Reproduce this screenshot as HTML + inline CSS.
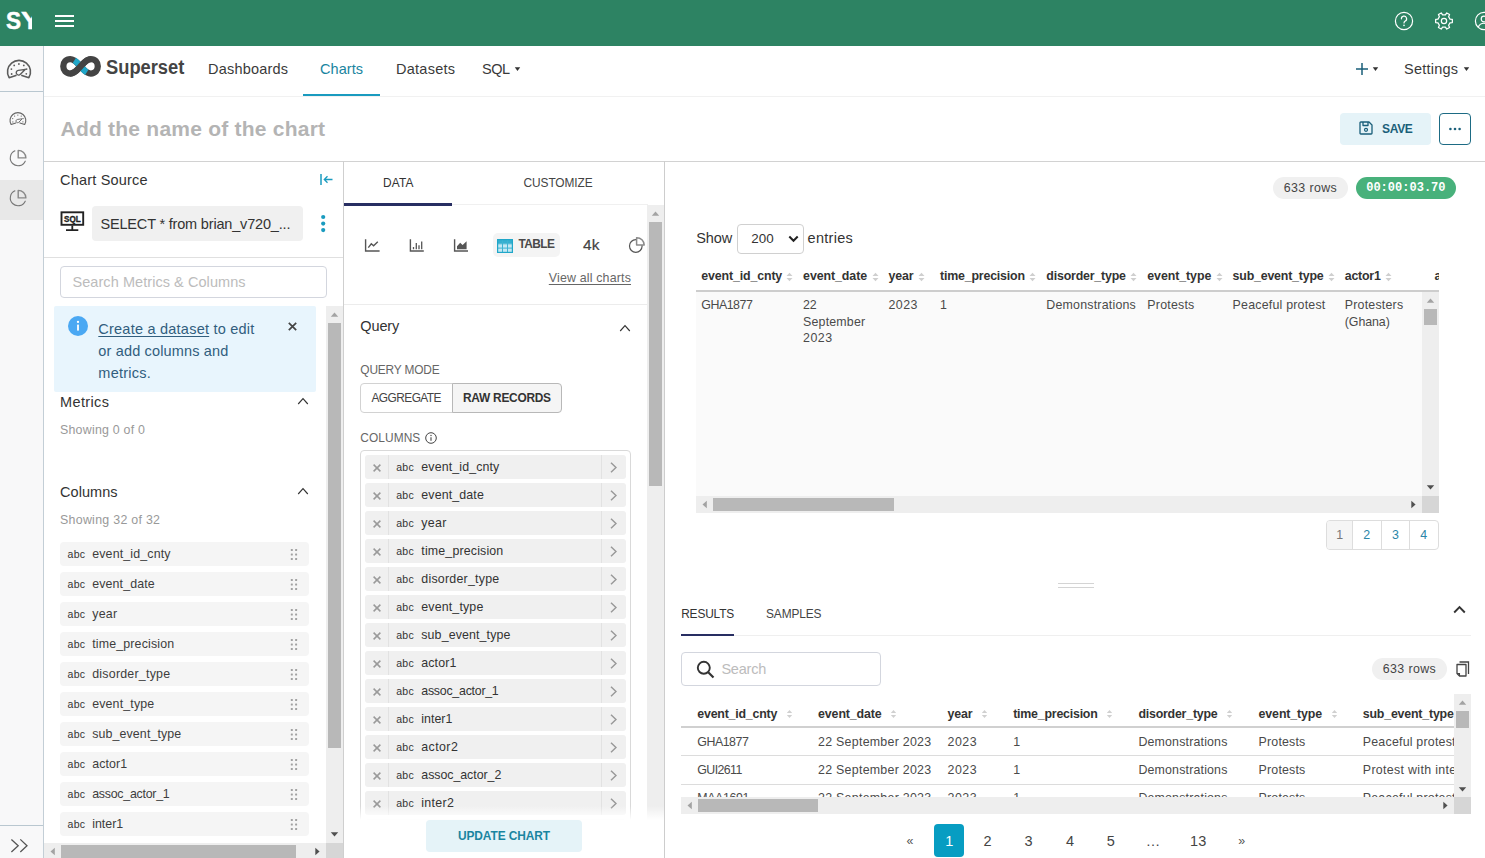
<!DOCTYPE html>
<html lang="en"><head><meta charset="utf-8"><title>Superset - Explore</title>
<style>
html,body{margin:0;padding:0;}
body{width:1485px;height:858px;overflow:hidden;position:relative;background:#fff;font-family:"Liberation Sans",sans-serif;font-size:14px;color:#333;}
#root{position:absolute;left:0;top:0;width:1485px;height:858px;overflow:hidden;}
#root div,#root span.t,#root svg{position:absolute;box-sizing:border-box;}
span.t{white-space:nowrap;}
</style></head><body><div id="root">
<div style="left:0px;top:0px;width:1485px;height:46px;background:#2d8363;"></div>
<div style="left:0;top:0;width:32.100px;height:46px;overflow:hidden"><span class="t" style="left:5.700px;top:4.200px;font-size:24.500px;line-height:34px;color:#fff;font-weight:700;-webkit-text-stroke:.5px #fff;transform-origin:0 50%;transform:scaleX(.92);">S</span><span class="t" style="left:21.100px;top:4.200px;font-size:24.500px;line-height:34px;color:#fff;font-weight:700;-webkit-text-stroke:.5px #fff;transform-origin:0 50%;transform:scaleX(1.18);">Y</span></div>
<svg style="left:54.800px;top:14px" width="19" height="14" viewBox="0 0 19 14"><path d="M0 2H19M0 7.100H19M0 12.100H19" stroke="#fff" stroke-width="2" fill="none"/></svg>
<svg style="left:1394px;top:11px" width="20" height="20" viewBox="0 0 20 20"><circle cx="10" cy="10" r="8.6" fill="none" stroke="#fff" stroke-width="1.2"/><path d="M7.4 7.8a2.6 2.6 0 1 1 3.9 2.2c-.8.5-1.3 1-1.3 2" fill="none" stroke="#fff" stroke-width="1.2" stroke-linecap="round"/><circle cx="10" cy="14.4" r=".8" fill="#fff"/></svg>
<svg style="left:1433.700px;top:11.100px" width="20" height="20" viewBox="0 0 20 20"><path d="M16.02 8.14L18.35 8.39L18.35 11.61L16.02 11.86L14.62 14.28L15.56 16.43L12.78 18.03L11.40 16.14L8.60 16.14L7.22 18.03L4.44 16.43L5.38 14.28L3.98 11.86L1.65 11.61L1.65 8.39L3.98 8.14L5.38 5.72L4.44 3.57L7.22 1.97L8.60 3.86L11.40 3.86L12.78 1.97L15.56 3.57L14.62 5.72Z" fill="none" stroke="#fff" stroke-width="1.250" stroke-linejoin="round"/><circle cx="10" cy="10" r="2.650" fill="none" stroke="#fff" stroke-width="1.250"/></svg>
<svg style="left:1473.900px;top:11px" width="20" height="20" viewBox="0 0 20 20"><circle cx="10" cy="10" r="8.6" fill="none" stroke="#fff" stroke-width="1.2"/><circle cx="10" cy="8" r="2.8" fill="none" stroke="#fff" stroke-width="1.2"/><path d="M4.300 16a6.200 6.200 0 0 1 11.400 0" fill="none" stroke="#fff" stroke-width="1.2"/></svg>
<div style="left:0px;top:46px;width:44px;height:812px;background:#f8f8f9;border-right:1px solid #c3ced6;"></div>
<div style="left:0px;top:91px;width:43px;height:1px;background:#b9c7d0;"></div>
<svg style="left:6px;top:58px" width="26" height="22" viewBox="6 58 26 22"><path d="M15.900 75.400L9.100 77.700A11.500 11.500 0 1 1 28.900 77.700L21.900 75.400" fill="none" stroke="#5c5c5c" stroke-width="1.6" stroke-linejoin="round" stroke-linecap="round"/><path d="M25.400 69.300L18.300 70.300A2.400 2.400 0 1 0 20.400 74.300Z" fill="none" stroke="#5c5c5c" stroke-width="1.36" stroke-linejoin="round"/><circle cx="11.65" cy="74" r=".9" fill="#5c5c5c"/><circle cx="11.4" cy="69.1" r=".9" fill="#5c5c5c"/><circle cx="14.2" cy="65.4" r=".9" fill="#5c5c5c"/><circle cx="18.9" cy="64" r=".9" fill="#5c5c5c"/><circle cx="23.8" cy="65.4" r=".9" fill="#5c5c5c"/><circle cx="26.6" cy="69.1" r=".9" fill="#5c5c5c"/><circle cx="26.3" cy="73.8" r=".9" fill="#5c5c5c"/></svg>
<svg style="left:9.200px;top:110.600px" width="17.840" height="15.100" viewBox="6 58 26 22"><path d="M15.900 75.400L9.100 77.700A11.500 11.500 0 1 1 28.900 77.700L21.900 75.400" fill="none" stroke="#666" stroke-width="1.65" stroke-linejoin="round" stroke-linecap="round"/><path d="M25.400 69.300L18.300 70.300A2.400 2.400 0 1 0 20.400 74.300Z" fill="none" stroke="#666" stroke-width="1.4024999999999999" stroke-linejoin="round"/><circle cx="11.65" cy="74" r=".9" fill="#666"/><circle cx="11.4" cy="69.1" r=".9" fill="#666"/><circle cx="14.2" cy="65.4" r=".9" fill="#666"/><circle cx="18.9" cy="64" r=".9" fill="#666"/><circle cx="23.8" cy="65.4" r=".9" fill="#666"/><circle cx="26.6" cy="69.1" r=".9" fill="#666"/><circle cx="26.3" cy="73.8" r=".9" fill="#666"/></svg>
<svg style="left:8px;top:148px" width="20" height="20" viewBox="8 148 20 20"><path d="M14.930 150.870A7.800 7.800 0 1 0 25.230 161.170" fill="none" stroke="#777" stroke-width="1.100" stroke-linecap="round"/><path d="M18.200 157.900V150.400A7.700 7.700 0 0 1 25.900 157.900Z" fill="none" stroke="#888" stroke-width="1.400" stroke-linejoin="round"/></svg>
<div style="left:0px;top:180px;width:43px;height:40px;background:#e8e8e8;"></div>
<svg style="left:8px;top:188px" width="20" height="20" viewBox="8 148 20 20"><path d="M14.930 150.870A7.800 7.800 0 1 0 25.230 161.170" fill="none" stroke="#777" stroke-width="1.100" stroke-linecap="round"/><path d="M18.200 157.900V150.400A7.700 7.700 0 0 1 25.900 157.900Z" fill="none" stroke="#888" stroke-width="1.400" stroke-linejoin="round"/></svg>
<div style="left:0px;top:825px;width:43px;height:1px;background:#b9c7d0;"></div>
<svg style="left:9px;top:837px" width="20" height="17" viewBox="9 837 20 17"><path d="M11.400 839.400L18.200 845.700L11.400 852M20.300 839.400L27 845.700L20.300 852" fill="none" stroke="#555" stroke-width="1.300"/></svg>
<div style="left:44px;top:96px;width:1441px;height:1px;background:#f1f1f1;"></div>
<svg style="left:58px;top:54px" width="46" height="26" viewBox="58 54 46 26"><path d="M80.550 66.350C77.500 63 74.500 59.100 70.200 59.100C66 59.100 63.300 62.300 63.300 66.350C63.300 70.400 66 73.600 70.200 73.600C74.500 73.600 77.500 69.700 80.550 66.350C83.600 63 86.600 59.100 90.900 59.100C95.100 59.100 97.800 62.300 97.800 66.350C97.800 70.400 95.100 73.600 90.900 73.600C86.600 73.600 83.600 69.700 80.550 66.350Z" fill="none" stroke="#444" stroke-width="6.300"/><path pathLength="100" d="M70.200 59.100C74.500 59.100 77.500 63 80.550 66.350C83.600 69.700 86.600 73.600 90.900 73.600" fill="none" stroke="#20a7c9" stroke-width="6.300" stroke-dasharray="0 17 66 17"/><path d="M70.200 73.600C74.500 73.600 77.500 69.700 80.550 66.350C83.600 63 86.600 59.100 90.900 59.100" fill="none" stroke="#444" stroke-width="6.300"/></svg>
<span class="t" style="transform-origin:0 50%;transform:scaleX(0.915);left:106px;top:52.900000000000006px;font-size:20px;line-height:28px;color:#444;font-weight:700;">Superset</span>
<span class="t" style="letter-spacing:0.2px;left:208px;top:59.0px;font-size:14.5px;line-height:20px;color:#3a3a3a;">Dashboards</span>
<span class="t" style="letter-spacing:0.06px;left:320px;top:59.0px;font-size:14.5px;line-height:20px;color:#1a85a0;">Charts</span>
<div style="left:303px;top:94px;width:77px;height:2.4px;background:#1a9bbf;"></div>
<span class="t" style="letter-spacing:0.25px;left:396px;top:59.0px;font-size:14.5px;line-height:20px;color:#3a3a3a;">Datasets</span>
<span class="t" style="letter-spacing:-0.51px;left:482px;top:59.0px;font-size:14.5px;line-height:20px;color:#3a3a3a;">SQL</span>
<svg style="left:514px;top:67px" width="7" height="5" viewBox="0 0 7 5"><path d="M.8.300H6.200L3.500 4Z" fill="#333"/></svg>
<svg style="left:1356px;top:63px" width="12" height="12" viewBox="0 0 12 12"><path d="M6 0V12M0 6H12" stroke="#1a5f7a" stroke-width="1.500"/></svg>
<svg style="left:1372px;top:67px" width="7" height="5" viewBox="0 0 7 5"><path d="M.8.300H6.200L3.500 4Z" fill="#333"/></svg>
<span class="t" style="letter-spacing:0.23px;left:1404px;top:59.0px;font-size:14.5px;line-height:20px;color:#3a3a3a;">Settings</span>
<svg style="left:1463px;top:67px" width="7" height="5" viewBox="0 0 7 5"><path d="M.8.300H6.200L3.500 4Z" fill="#333"/></svg>
<span class="t" style="letter-spacing:0.23px;left:60.5px;top:113.80000000000001px;font-size:21px;line-height:29px;color:#b4b4b4;font-weight:700;">Add the name of the chart</span>
<div style="left:1340px;top:113px;width:90.6px;height:32px;background:#e5f3f8;border-radius:4px;"></div>
<svg style="left:1358px;top:120px" width="16" height="16" viewBox="0 0 16 16"><path d="M2 2.800a.8.800 0 0 1 .8-.8H11L14 5V13.200a.8.800 0 0 1-.8.800H2.800a.8.800 0 0 1-.8-.8Z M5 2V5.500H10V2" fill="none" stroke="#1a5f7a" stroke-width="1.300" stroke-linejoin="round"/><circle cx="8" cy="9.800" r="1.500" fill="none" stroke="#1a5f7a" stroke-width="1.200"/></svg>
<span class="t" style="letter-spacing:-0.37px;left:1382.1px;top:121.1px;font-size:12px;line-height:17px;color:#1a5f7a;font-weight:700;">SAVE</span>
<div style="left:1439px;top:113px;width:32px;height:32px;border:1.300px solid #1d6b84;border-radius:4px;background:#fff;"></div>
<svg style="left:1449px;top:127px" width="12" height="4" viewBox="0 0 12 4"><circle cx="1.400" cy="2" r="1.300" fill="#1a5f7a"/><circle cx="6" cy="2" r="1.300" fill="#1a5f7a"/><circle cx="10.600" cy="2" r="1.300" fill="#1a5f7a"/></svg>
<div style="left:44px;top:160.6px;width:1441px;height:1px;background:#d2d2d2;"></div>
<div style="left:343.3px;top:161px;width:1px;height:697px;background:#cfcfcf;"></div>
<span class="t" style="letter-spacing:0.19px;left:60px;top:170.0px;font-size:14.5px;line-height:20px;color:#333;">Chart Source</span>
<svg style="left:320px;top:174px" width="13" height="11" viewBox="0 0 13 11"><path d="M1 0V11" stroke="#1a9bbf" stroke-width="1.500"/><path d="M12.500 5.500H4.500M7.500 2.300L4.300 5.500L7.500 8.700" fill="none" stroke="#1a9bbf" stroke-width="1.300"/></svg>
<svg style="left:60px;top:210px" width="26" height="23" viewBox="60 210 26 23"><rect x="61.500" y="212.300" width="21.700" height="12.500" fill="#fff" stroke="#222" stroke-width="1.900"/><path d="M72.300 225.600V229.600M66 230.100H78.300" stroke="#222" stroke-width="1.800"/><text x="72.400" y="221.900" font-family="Liberation Sans, sans-serif" font-size="8.600" font-weight="700" text-anchor="middle" fill="#222" stroke="#222" stroke-width=".35" textLength="16.600" lengthAdjust="spacingAndGlyphs">SQL</text></svg>
<div style="left:92px;top:206px;width:211px;height:35px;background:#f0f0f0;border-radius:4px;"></div>
<span class="t" style="letter-spacing:-0.18px;left:100.5px;top:214.0px;font-size:14.5px;line-height:20px;color:#333;">SELECT * from brian_v720_...</span>
<svg style="left:320px;top:213px" width="6" height="21" viewBox="0 0 6 21"><circle cx="3.200" cy="4" r="2.100" fill="#1a9bbf"/><circle cx="3.200" cy="10.600" r="2.100" fill="#1a9bbf"/><circle cx="3.200" cy="17.100" r="2.100" fill="#1a9bbf"/></svg>
<div style="left:44px;top:257px;width:299px;height:1px;background:#e0e0e0;"></div>
<div style="left:60px;top:266px;width:267px;height:32px;border:1px solid #d3d6de;border-radius:4px;background:#fff;"></div>
<span class="t" style="letter-spacing:0.06px;left:72.5px;top:272.0px;font-size:14.5px;line-height:20px;color:#bcbcbc;">Search Metrics &amp; Columns</span>
<div style="left:54px;top:306px;width:262px;height:86px;background:#e8f5fd;border-radius:2px;"></div>
<svg style="left:68px;top:316px" width="20" height="20" viewBox="0 0 20 20"><circle cx="10" cy="10" r="10" fill="#4aa8f3"/><rect x="9.100" y="8.600" width="1.800" height="6" fill="#fff"/><circle cx="10" cy="5.900" r="1.150" fill="#fff"/></svg>
<span class="t" style="letter-spacing:0.23px;left:98.3px;top:319.0px;font-size:14.5px;line-height:20px;color:#315e7e;"><span style="text-decoration:underline;text-underline-offset:2px">Create a dataset</span> to edit</span>
<span class="t" style="letter-spacing:0.16px;left:98.3px;top:341.0px;font-size:14.5px;line-height:20px;color:#315e7e;">or add columns and</span>
<span class="t" style="letter-spacing:0.25px;left:98.3px;top:363.0px;font-size:14.5px;line-height:20px;color:#315e7e;">metrics.</span>
<svg style="left:288px;top:322px" width="9" height="9" viewBox="0 0 9 9"><path d="M.8.800L8.200 8.200M8.200.800L.8 8.200" stroke="#444" stroke-width="1.700"/></svg>
<span class="t" style="letter-spacing:0.38px;left:60px;top:391.6px;font-size:14.5px;line-height:20px;color:#333;">Metrics</span>
<svg style="left:297px;top:397px" width="12" height="8" viewBox="0 0 12 8"><path d="M1.200 7L6 1.700L10.800 7" fill="none" stroke="#333" stroke-width="1.150"/></svg>
<span class="t" style="letter-spacing:0.23px;left:60px;top:422.1px;font-size:12.4px;line-height:17px;color:#999;">Showing 0 of 0</span>
<span class="t" style="letter-spacing:0.05px;left:60px;top:482.0px;font-size:14.5px;line-height:20px;color:#333;">Columns</span>
<svg style="left:297px;top:487px" width="12" height="8" viewBox="0 0 12 8"><path d="M1.200 7L6 1.700L10.800 7" fill="none" stroke="#333" stroke-width="1.150"/></svg>
<span class="t" style="letter-spacing:0.28px;left:60px;top:511.5px;font-size:12.4px;line-height:17px;color:#999;">Showing 32 of 32</span>
<div style="left:60px;top:542px;width:249px;height:24px;background:#f5f5f5;border-radius:4px;"></div>
<span class="t" style="letter-spacing:0.23px;left:67.6px;top:546.5px;font-size:10.5px;line-height:15px;color:#333;">abc</span>
<span class="t" style="letter-spacing:0.16px;left:92.2px;top:545.5px;font-size:12.4px;line-height:17px;color:#3d3d3d;">event_id_cnty</span>
<svg style="left:289.5px;top:547.5px" width="9" height="13" viewBox="0 0 9 13"><rect x="0.8" y="1.1" width="2" height="2" rx=".5" fill="#a0a0a0"/><rect x="0.8" y="5.5" width="2" height="2" rx=".5" fill="#a0a0a0"/><rect x="0.8" y="9.9" width="2" height="2" rx=".5" fill="#a0a0a0"/><rect x="5.1" y="1.1" width="2" height="2" rx=".5" fill="#a0a0a0"/><rect x="5.1" y="5.5" width="2" height="2" rx=".5" fill="#a0a0a0"/><rect x="5.1" y="9.9" width="2" height="2" rx=".5" fill="#a0a0a0"/></svg>
<div style="left:60px;top:572px;width:249px;height:24px;background:#f5f5f5;border-radius:4px;"></div>
<span class="t" style="letter-spacing:0.23px;left:67.6px;top:576.5px;font-size:10.5px;line-height:15px;color:#333;">abc</span>
<span class="t" style="letter-spacing:0.13px;left:92.2px;top:575.5px;font-size:12.4px;line-height:17px;color:#3d3d3d;">event_date</span>
<svg style="left:289.5px;top:577.5px" width="9" height="13" viewBox="0 0 9 13"><rect x="0.8" y="1.1" width="2" height="2" rx=".5" fill="#a0a0a0"/><rect x="0.8" y="5.5" width="2" height="2" rx=".5" fill="#a0a0a0"/><rect x="0.8" y="9.9" width="2" height="2" rx=".5" fill="#a0a0a0"/><rect x="5.1" y="1.1" width="2" height="2" rx=".5" fill="#a0a0a0"/><rect x="5.1" y="5.5" width="2" height="2" rx=".5" fill="#a0a0a0"/><rect x="5.1" y="9.9" width="2" height="2" rx=".5" fill="#a0a0a0"/></svg>
<div style="left:60px;top:602px;width:249px;height:24px;background:#f5f5f5;border-radius:4px;"></div>
<span class="t" style="letter-spacing:0.23px;left:67.6px;top:606.5px;font-size:10.5px;line-height:15px;color:#333;">abc</span>
<span class="t" style="letter-spacing:0.3px;left:92.2px;top:605.5px;font-size:12.4px;line-height:17px;color:#3d3d3d;">year</span>
<svg style="left:289.5px;top:607.5px" width="9" height="13" viewBox="0 0 9 13"><rect x="0.8" y="1.1" width="2" height="2" rx=".5" fill="#a0a0a0"/><rect x="0.8" y="5.5" width="2" height="2" rx=".5" fill="#a0a0a0"/><rect x="0.8" y="9.9" width="2" height="2" rx=".5" fill="#a0a0a0"/><rect x="5.1" y="1.1" width="2" height="2" rx=".5" fill="#a0a0a0"/><rect x="5.1" y="5.5" width="2" height="2" rx=".5" fill="#a0a0a0"/><rect x="5.1" y="9.9" width="2" height="2" rx=".5" fill="#a0a0a0"/></svg>
<div style="left:60px;top:632px;width:249px;height:24px;background:#f5f5f5;border-radius:4px;"></div>
<span class="t" style="letter-spacing:0.23px;left:67.6px;top:636.5px;font-size:10.5px;line-height:15px;color:#333;">abc</span>
<span class="t" style="letter-spacing:0.16px;left:92.2px;top:635.5px;font-size:12.4px;line-height:17px;color:#3d3d3d;">time_precision</span>
<svg style="left:289.5px;top:637.5px" width="9" height="13" viewBox="0 0 9 13"><rect x="0.8" y="1.1" width="2" height="2" rx=".5" fill="#a0a0a0"/><rect x="0.8" y="5.5" width="2" height="2" rx=".5" fill="#a0a0a0"/><rect x="0.8" y="9.9" width="2" height="2" rx=".5" fill="#a0a0a0"/><rect x="5.1" y="1.1" width="2" height="2" rx=".5" fill="#a0a0a0"/><rect x="5.1" y="5.5" width="2" height="2" rx=".5" fill="#a0a0a0"/><rect x="5.1" y="9.9" width="2" height="2" rx=".5" fill="#a0a0a0"/></svg>
<div style="left:60px;top:662px;width:249px;height:24px;background:#f5f5f5;border-radius:4px;"></div>
<span class="t" style="letter-spacing:0.23px;left:67.6px;top:666.5px;font-size:10.5px;line-height:15px;color:#333;">abc</span>
<span class="t" style="letter-spacing:0.24px;left:92.2px;top:665.5px;font-size:12.4px;line-height:17px;color:#3d3d3d;">disorder_type</span>
<svg style="left:289.5px;top:667.5px" width="9" height="13" viewBox="0 0 9 13"><rect x="0.8" y="1.1" width="2" height="2" rx=".5" fill="#a0a0a0"/><rect x="0.8" y="5.5" width="2" height="2" rx=".5" fill="#a0a0a0"/><rect x="0.8" y="9.9" width="2" height="2" rx=".5" fill="#a0a0a0"/><rect x="5.1" y="1.1" width="2" height="2" rx=".5" fill="#a0a0a0"/><rect x="5.1" y="5.5" width="2" height="2" rx=".5" fill="#a0a0a0"/><rect x="5.1" y="9.9" width="2" height="2" rx=".5" fill="#a0a0a0"/></svg>
<div style="left:60px;top:692px;width:249px;height:24px;background:#f5f5f5;border-radius:4px;"></div>
<span class="t" style="letter-spacing:0.23px;left:67.6px;top:696.5px;font-size:10.5px;line-height:15px;color:#333;">abc</span>
<span class="t" style="letter-spacing:0.15px;left:92.2px;top:695.5px;font-size:12.4px;line-height:17px;color:#3d3d3d;">event_type</span>
<svg style="left:289.5px;top:697.5px" width="9" height="13" viewBox="0 0 9 13"><rect x="0.8" y="1.1" width="2" height="2" rx=".5" fill="#a0a0a0"/><rect x="0.8" y="5.5" width="2" height="2" rx=".5" fill="#a0a0a0"/><rect x="0.8" y="9.9" width="2" height="2" rx=".5" fill="#a0a0a0"/><rect x="5.1" y="1.1" width="2" height="2" rx=".5" fill="#a0a0a0"/><rect x="5.1" y="5.5" width="2" height="2" rx=".5" fill="#a0a0a0"/><rect x="5.1" y="9.9" width="2" height="2" rx=".5" fill="#a0a0a0"/></svg>
<div style="left:60px;top:722px;width:249px;height:24px;background:#f5f5f5;border-radius:4px;"></div>
<span class="t" style="letter-spacing:0.23px;left:67.6px;top:726.5px;font-size:10.5px;line-height:15px;color:#333;">abc</span>
<span class="t" style="letter-spacing:0.12px;left:92.2px;top:725.5px;font-size:12.4px;line-height:17px;color:#3d3d3d;">sub_event_type</span>
<svg style="left:289.5px;top:727.5px" width="9" height="13" viewBox="0 0 9 13"><rect x="0.8" y="1.1" width="2" height="2" rx=".5" fill="#a0a0a0"/><rect x="0.8" y="5.5" width="2" height="2" rx=".5" fill="#a0a0a0"/><rect x="0.8" y="9.9" width="2" height="2" rx=".5" fill="#a0a0a0"/><rect x="5.1" y="1.1" width="2" height="2" rx=".5" fill="#a0a0a0"/><rect x="5.1" y="5.5" width="2" height="2" rx=".5" fill="#a0a0a0"/><rect x="5.1" y="9.9" width="2" height="2" rx=".5" fill="#a0a0a0"/></svg>
<div style="left:60px;top:752px;width:249px;height:24px;background:#f5f5f5;border-radius:4px;"></div>
<span class="t" style="letter-spacing:0.23px;left:67.6px;top:756.5px;font-size:10.5px;line-height:15px;color:#333;">abc</span>
<span class="t" style="letter-spacing:0.11px;left:92.2px;top:755.5px;font-size:12.4px;line-height:17px;color:#3d3d3d;">actor1</span>
<svg style="left:289.5px;top:757.5px" width="9" height="13" viewBox="0 0 9 13"><rect x="0.8" y="1.1" width="2" height="2" rx=".5" fill="#a0a0a0"/><rect x="0.8" y="5.5" width="2" height="2" rx=".5" fill="#a0a0a0"/><rect x="0.8" y="9.9" width="2" height="2" rx=".5" fill="#a0a0a0"/><rect x="5.1" y="1.1" width="2" height="2" rx=".5" fill="#a0a0a0"/><rect x="5.1" y="5.5" width="2" height="2" rx=".5" fill="#a0a0a0"/><rect x="5.1" y="9.9" width="2" height="2" rx=".5" fill="#a0a0a0"/></svg>
<div style="left:60px;top:782px;width:249px;height:24px;background:#f5f5f5;border-radius:4px;"></div>
<span class="t" style="letter-spacing:0.23px;left:67.6px;top:786.5px;font-size:10.5px;line-height:15px;color:#333;">abc</span>
<span class="t" style="letter-spacing:-0.26px;left:92.2px;top:785.5px;font-size:12.4px;line-height:17px;color:#3d3d3d;">assoc_actor_1</span>
<svg style="left:289.5px;top:787.5px" width="9" height="13" viewBox="0 0 9 13"><rect x="0.8" y="1.1" width="2" height="2" rx=".5" fill="#a0a0a0"/><rect x="0.8" y="5.5" width="2" height="2" rx=".5" fill="#a0a0a0"/><rect x="0.8" y="9.9" width="2" height="2" rx=".5" fill="#a0a0a0"/><rect x="5.1" y="1.1" width="2" height="2" rx=".5" fill="#a0a0a0"/><rect x="5.1" y="5.5" width="2" height="2" rx=".5" fill="#a0a0a0"/><rect x="5.1" y="9.9" width="2" height="2" rx=".5" fill="#a0a0a0"/></svg>
<div style="left:60px;top:812px;width:249px;height:24px;background:#f5f5f5;border-radius:4px;"></div>
<span class="t" style="letter-spacing:0.23px;left:67.6px;top:816.5px;font-size:10.5px;line-height:15px;color:#333;">abc</span>
<span class="t" style="letter-spacing:0.0px;left:92.2px;top:815.5px;font-size:12.4px;line-height:17px;color:#3d3d3d;">inter1</span>
<svg style="left:289.5px;top:817.5px" width="9" height="13" viewBox="0 0 9 13"><rect x="0.8" y="1.1" width="2" height="2" rx=".5" fill="#a0a0a0"/><rect x="0.8" y="5.5" width="2" height="2" rx=".5" fill="#a0a0a0"/><rect x="0.8" y="9.9" width="2" height="2" rx=".5" fill="#a0a0a0"/><rect x="5.1" y="1.1" width="2" height="2" rx=".5" fill="#a0a0a0"/><rect x="5.1" y="5.5" width="2" height="2" rx=".5" fill="#a0a0a0"/><rect x="5.1" y="9.9" width="2" height="2" rx=".5" fill="#a0a0a0"/></svg>
<div style="left:326px;top:306px;width:17px;height:537px;background:#eeeeee;"></div>
<div style="left:328px;top:323px;width:13px;height:425px;background:#b8b8b8;"></div>
<svg style="left:326px;top:306px" width="17" height="17" viewBox="0 0 17 17"><path d="M4.800 10.800H12.200L8.500 6.500Z" fill="#a3a3a3"/></svg>
<svg style="left:326px;top:826px" width="17" height="17" viewBox="0 0 17 17"><path d="M4.800 6.300H12.200L8.500 10.600Z" fill="#505050"/></svg>
<div style="left:44px;top:843px;width:282px;height:17px;background:#eeeeee;"></div>
<div style="left:61px;top:845px;width:235px;height:13px;background:#b8b8b8;"></div>
<svg style="left:44px;top:843px" width="17" height="17" viewBox="0 0 17 17"><path d="M10.800 4.800V12.200L6.500 8.500Z" fill="#a3a3a3"/></svg>
<svg style="left:309px;top:843px" width="17" height="17" viewBox="0 0 17 17"><path d="M6.300 4.800V12.200L10.600 8.500Z" fill="#505050"/></svg>
<div style="left:326px;top:843px;width:17px;height:17px;background:#d6d6d6;"></div>
<div style="left:664px;top:161px;width:1px;height:697px;background:#cdcdcd;"></div>
<div style="left:344px;top:204px;width:304px;height:1px;background:#f0f0f0;"></div>
<span class="t" style="letter-spacing:0.18px;left:383px;top:174.5px;font-size:11.9px;line-height:17px;color:#333;">DATA</span>
<div style="left:344px;top:203px;width:108px;height:2.5px;background:#282e62;"></div>
<span class="t" style="letter-spacing:-0.1px;left:523.6px;top:174.5px;font-size:11.9px;line-height:17px;color:#444;">CUSTOMIZE</span>
<svg style="left:364px;top:238px" width="17" height="15" viewBox="364 238 17 15"><path d="M365.600 239.300V251H379.600" fill="none" stroke="#555" stroke-width="1.400"/><path d="M368.300 247.600L371.300 243.800L373.600 245.800L377.800 241.800" fill="none" stroke="#555" stroke-width="1.400"/></svg>
<svg style="left:409px;top:238px" width="17" height="15" viewBox="409 238 17 15"><path d="M410.400 239.300V251H423.800" fill="none" stroke="#555" stroke-width="1.400"/><path d="M413.500 249.200V247M416.300 249.200V243M419 249.200V245.300M421.700 249.200V241.500" fill="none" stroke="#555" stroke-width="1.300"/></svg>
<svg style="left:453px;top:238px" width="17" height="15" viewBox="453 238 17 15"><path d="M454.600 239.300V251H468" fill="none" stroke="#555" stroke-width="1.400"/><path d="M457 249.300V246.300L460.200 242.800L462.600 245L466.600 241.200V249.300Z" fill="#555"/></svg>
<div style="left:493px;top:233px;width:66.5px;height:24px;background:#f4f4f4;border-radius:5px;"></div>
<svg style="left:497px;top:238.500px" width="16" height="14" viewBox="0 0 16 14"><rect x=".6" y=".6" width="14.800" height="12.800" fill="#c4e8f3"/><rect x=".6" y=".6" width="14.800" height="3.800" fill="#35b0d0"/><path d="M.6 4.800H15.400M.6 9.100H15.400M5.500.600V13.400M10.500.600V13.400" stroke="#3cb3d2" stroke-width="1" fill="none"/><rect x=".6" y=".6" width="14.800" height="12.800" fill="none" stroke="#20a7c9" stroke-width="1.200"/></svg>
<span class="t" style="letter-spacing:-0.61px;left:518.5px;top:235.8px;font-size:11.9px;line-height:17px;color:#4a4a4a;font-weight:700;">TABLE</span>
<span class="t" style="letter-spacing:0.12px;left:583px;top:234.2px;font-size:15.5px;line-height:22px;color:#444;-webkit-text-stroke:.2px #444;">4k</span>
<svg style="left:627px;top:236px" width="19" height="18" viewBox="627 236 19 18"><circle cx="635.800" cy="246" r="6.300" fill="none" stroke="#555" stroke-width="1.200"/><path d="M636.600 245.100V237.700A7.400 7.400 0 0 1 644.200 245.100Z" fill="#fff" stroke="#8a8a8a" stroke-width="1.500" stroke-linejoin="round"/></svg>
<span class="t" style="letter-spacing:0.17px;left:548.8px;top:269.5px;font-size:12.4px;line-height:17px;color:#666;text-decoration:underline;text-underline-offset:2px;">View all charts</span>
<div style="left:344px;top:304px;width:304px;height:1px;background:#ececec;"></div>
<span class="t" style="letter-spacing:-0.12px;left:360.3px;top:316.0px;font-size:14.5px;line-height:20px;color:#333;">Query</span>
<svg style="left:619px;top:324px" width="12" height="8" viewBox="0 0 12 8"><path d="M1.200 7L6 1.700L10.800 7" fill="none" stroke="#333" stroke-width="1.150"/></svg>
<span class="t" style="letter-spacing:-0.16px;left:360.3px;top:362.3px;font-size:11.9px;line-height:17px;color:#666;">QUERY MODE</span>
<div style="left:360px;top:383.4px;width:93px;height:29.4px;border:1px solid #d2d2d2;border-radius:4px 0 0 4px;background:#fff;"></div>
<span class="t" style="letter-spacing:-0.56px;left:371.5px;top:389.5px;font-size:11.9px;line-height:17px;color:#444;">AGGREGATE</span>
<div style="left:452px;top:383.4px;width:110px;height:29.4px;border:1px solid #b8b8b8;border-radius:0 4px 4px 0;background:#f5f5f5;"></div>
<span class="t" style="letter-spacing:-0.25px;left:463px;top:389.5px;font-size:11.9px;line-height:17px;color:#333;font-weight:700;">RAW RECORDS</span>
<span class="t" style="letter-spacing:0.09px;left:360.3px;top:429.5px;font-size:11.9px;line-height:17px;color:#666;">COLUMNS</span>
<svg style="left:425px;top:432px" width="12" height="12" viewBox="0 0 12 12"><circle cx="6" cy="6" r="5.300" fill="none" stroke="#444" stroke-width="1"/><path d="M6 5.200V8.800" stroke="#444" stroke-width="1.100"/><circle cx="6" cy="3.500" r=".7" fill="#444"/></svg>
<div style="left:360px;top:450px;width:271px;height:400px;border:1px solid #d9d9d9;border-radius:4px;"></div>
<div style="left:365px;top:455px;width:261px;height:24px;background:#f0f0f0;border-radius:3px;"></div>
<div style="left:388px;top:455px;width:1px;height:24px;background:#e2e2e2;"></div>
<div style="left:601px;top:455px;width:1px;height:24px;background:#e2e2e2;"></div>
<svg style="left:373px;top:463.5px" width="8" height="8" viewBox="0 0 8 8"><path d="M.6.600L7.400 7.400M7.400.600L.6 7.400" stroke="#9a9a9a" stroke-width="1.500"/></svg>
<span class="t" style="letter-spacing:0.23px;left:396.3px;top:459.5px;font-size:10.5px;line-height:15px;color:#333;">abc</span>
<span class="t" style="letter-spacing:0.13px;left:421.3px;top:458.5px;font-size:12.4px;line-height:17px;color:#333;">event_id_cnty</span>
<svg style="left:610px;top:461.5px" width="7" height="11" viewBox="0 0 7 11"><path d="M1 .8L6 5.500L1 10.200" fill="none" stroke="#999" stroke-width="1.500"/></svg>
<div style="left:365px;top:483px;width:261px;height:24px;background:#f0f0f0;border-radius:3px;"></div>
<div style="left:388px;top:483px;width:1px;height:24px;background:#e2e2e2;"></div>
<div style="left:601px;top:483px;width:1px;height:24px;background:#e2e2e2;"></div>
<svg style="left:373px;top:491.5px" width="8" height="8" viewBox="0 0 8 8"><path d="M.6.600L7.400 7.400M7.400.600L.6 7.400" stroke="#9a9a9a" stroke-width="1.500"/></svg>
<span class="t" style="letter-spacing:0.23px;left:396.3px;top:487.5px;font-size:10.5px;line-height:15px;color:#333;">abc</span>
<span class="t" style="letter-spacing:0.13px;left:421.3px;top:486.5px;font-size:12.4px;line-height:17px;color:#333;">event_date</span>
<svg style="left:610px;top:489.5px" width="7" height="11" viewBox="0 0 7 11"><path d="M1 .8L6 5.500L1 10.200" fill="none" stroke="#999" stroke-width="1.500"/></svg>
<div style="left:365px;top:511px;width:261px;height:24px;background:#f0f0f0;border-radius:3px;"></div>
<div style="left:388px;top:511px;width:1px;height:24px;background:#e2e2e2;"></div>
<div style="left:601px;top:511px;width:1px;height:24px;background:#e2e2e2;"></div>
<svg style="left:373px;top:519.5px" width="8" height="8" viewBox="0 0 8 8"><path d="M.6.600L7.400 7.400M7.400.600L.6 7.400" stroke="#9a9a9a" stroke-width="1.500"/></svg>
<span class="t" style="letter-spacing:0.23px;left:396.3px;top:515.5px;font-size:10.5px;line-height:15px;color:#333;">abc</span>
<span class="t" style="letter-spacing:0.3px;left:421.3px;top:514.5px;font-size:12.4px;line-height:17px;color:#333;">year</span>
<svg style="left:610px;top:517.5px" width="7" height="11" viewBox="0 0 7 11"><path d="M1 .8L6 5.500L1 10.200" fill="none" stroke="#999" stroke-width="1.500"/></svg>
<div style="left:365px;top:539px;width:261px;height:24px;background:#f0f0f0;border-radius:3px;"></div>
<div style="left:388px;top:539px;width:1px;height:24px;background:#e2e2e2;"></div>
<div style="left:601px;top:539px;width:1px;height:24px;background:#e2e2e2;"></div>
<svg style="left:373px;top:547.5px" width="8" height="8" viewBox="0 0 8 8"><path d="M.6.600L7.400 7.400M7.400.600L.6 7.400" stroke="#9a9a9a" stroke-width="1.500"/></svg>
<span class="t" style="letter-spacing:0.23px;left:396.3px;top:543.5px;font-size:10.5px;line-height:15px;color:#333;">abc</span>
<span class="t" style="letter-spacing:0.16px;left:421.3px;top:542.5px;font-size:12.4px;line-height:17px;color:#333;">time_precision</span>
<svg style="left:610px;top:545.5px" width="7" height="11" viewBox="0 0 7 11"><path d="M1 .8L6 5.500L1 10.200" fill="none" stroke="#999" stroke-width="1.500"/></svg>
<div style="left:365px;top:567px;width:261px;height:24px;background:#f0f0f0;border-radius:3px;"></div>
<div style="left:388px;top:567px;width:1px;height:24px;background:#e2e2e2;"></div>
<div style="left:601px;top:567px;width:1px;height:24px;background:#e2e2e2;"></div>
<svg style="left:373px;top:575.5px" width="8" height="8" viewBox="0 0 8 8"><path d="M.6.600L7.400 7.400M7.400.600L.6 7.400" stroke="#9a9a9a" stroke-width="1.500"/></svg>
<span class="t" style="letter-spacing:0.23px;left:396.3px;top:571.5px;font-size:10.5px;line-height:15px;color:#333;">abc</span>
<span class="t" style="letter-spacing:0.24px;left:421.3px;top:570.5px;font-size:12.4px;line-height:17px;color:#333;">disorder_type</span>
<svg style="left:610px;top:573.5px" width="7" height="11" viewBox="0 0 7 11"><path d="M1 .8L6 5.500L1 10.200" fill="none" stroke="#999" stroke-width="1.500"/></svg>
<div style="left:365px;top:595px;width:261px;height:24px;background:#f0f0f0;border-radius:3px;"></div>
<div style="left:388px;top:595px;width:1px;height:24px;background:#e2e2e2;"></div>
<div style="left:601px;top:595px;width:1px;height:24px;background:#e2e2e2;"></div>
<svg style="left:373px;top:603.5px" width="8" height="8" viewBox="0 0 8 8"><path d="M.6.600L7.400 7.400M7.400.600L.6 7.400" stroke="#9a9a9a" stroke-width="1.500"/></svg>
<span class="t" style="letter-spacing:0.23px;left:396.3px;top:599.5px;font-size:10.5px;line-height:15px;color:#333;">abc</span>
<span class="t" style="letter-spacing:0.15px;left:421.3px;top:598.5px;font-size:12.4px;line-height:17px;color:#333;">event_type</span>
<svg style="left:610px;top:601.5px" width="7" height="11" viewBox="0 0 7 11"><path d="M1 .8L6 5.500L1 10.200" fill="none" stroke="#999" stroke-width="1.500"/></svg>
<div style="left:365px;top:623px;width:261px;height:24px;background:#f0f0f0;border-radius:3px;"></div>
<div style="left:388px;top:623px;width:1px;height:24px;background:#e2e2e2;"></div>
<div style="left:601px;top:623px;width:1px;height:24px;background:#e2e2e2;"></div>
<svg style="left:373px;top:631.5px" width="8" height="8" viewBox="0 0 8 8"><path d="M.6.600L7.400 7.400M7.400.600L.6 7.400" stroke="#9a9a9a" stroke-width="1.500"/></svg>
<span class="t" style="letter-spacing:0.23px;left:396.3px;top:627.5px;font-size:10.5px;line-height:15px;color:#333;">abc</span>
<span class="t" style="letter-spacing:0.12px;left:421.3px;top:626.5px;font-size:12.4px;line-height:17px;color:#333;">sub_event_type</span>
<svg style="left:610px;top:629.5px" width="7" height="11" viewBox="0 0 7 11"><path d="M1 .8L6 5.500L1 10.200" fill="none" stroke="#999" stroke-width="1.500"/></svg>
<div style="left:365px;top:651px;width:261px;height:24px;background:#f0f0f0;border-radius:3px;"></div>
<div style="left:388px;top:651px;width:1px;height:24px;background:#e2e2e2;"></div>
<div style="left:601px;top:651px;width:1px;height:24px;background:#e2e2e2;"></div>
<svg style="left:373px;top:659.5px" width="8" height="8" viewBox="0 0 8 8"><path d="M.6.600L7.400 7.400M7.400.600L.6 7.400" stroke="#9a9a9a" stroke-width="1.500"/></svg>
<span class="t" style="letter-spacing:0.23px;left:396.3px;top:655.5px;font-size:10.5px;line-height:15px;color:#333;">abc</span>
<span class="t" style="letter-spacing:0.11px;left:421.3px;top:654.5px;font-size:12.4px;line-height:17px;color:#333;">actor1</span>
<svg style="left:610px;top:657.5px" width="7" height="11" viewBox="0 0 7 11"><path d="M1 .8L6 5.500L1 10.200" fill="none" stroke="#999" stroke-width="1.500"/></svg>
<div style="left:365px;top:679px;width:261px;height:24px;background:#f0f0f0;border-radius:3px;"></div>
<div style="left:388px;top:679px;width:1px;height:24px;background:#e2e2e2;"></div>
<div style="left:601px;top:679px;width:1px;height:24px;background:#e2e2e2;"></div>
<svg style="left:373px;top:687.5px" width="8" height="8" viewBox="0 0 8 8"><path d="M.6.600L7.400 7.400M7.400.600L.6 7.400" stroke="#9a9a9a" stroke-width="1.500"/></svg>
<span class="t" style="letter-spacing:0.23px;left:396.3px;top:683.5px;font-size:10.5px;line-height:15px;color:#333;">abc</span>
<span class="t" style="letter-spacing:-0.26px;left:421.3px;top:682.5px;font-size:12.4px;line-height:17px;color:#333;">assoc_actor_1</span>
<svg style="left:610px;top:685.5px" width="7" height="11" viewBox="0 0 7 11"><path d="M1 .8L6 5.500L1 10.200" fill="none" stroke="#999" stroke-width="1.500"/></svg>
<div style="left:365px;top:707px;width:261px;height:24px;background:#f0f0f0;border-radius:3px;"></div>
<div style="left:388px;top:707px;width:1px;height:24px;background:#e2e2e2;"></div>
<div style="left:601px;top:707px;width:1px;height:24px;background:#e2e2e2;"></div>
<svg style="left:373px;top:715.5px" width="8" height="8" viewBox="0 0 8 8"><path d="M.6.600L7.400 7.400M7.400.600L.6 7.400" stroke="#9a9a9a" stroke-width="1.500"/></svg>
<span class="t" style="letter-spacing:0.23px;left:396.3px;top:711.5px;font-size:10.5px;line-height:15px;color:#333;">abc</span>
<span class="t" style="letter-spacing:0.0px;left:421.3px;top:710.5px;font-size:12.4px;line-height:17px;color:#333;">inter1</span>
<svg style="left:610px;top:713.5px" width="7" height="11" viewBox="0 0 7 11"><path d="M1 .8L6 5.500L1 10.200" fill="none" stroke="#999" stroke-width="1.500"/></svg>
<div style="left:365px;top:735px;width:261px;height:24px;background:#f0f0f0;border-radius:3px;"></div>
<div style="left:388px;top:735px;width:1px;height:24px;background:#e2e2e2;"></div>
<div style="left:601px;top:735px;width:1px;height:24px;background:#e2e2e2;"></div>
<svg style="left:373px;top:743.5px" width="8" height="8" viewBox="0 0 8 8"><path d="M.6.600L7.400 7.400M7.400.600L.6 7.400" stroke="#9a9a9a" stroke-width="1.500"/></svg>
<span class="t" style="letter-spacing:0.23px;left:396.3px;top:739.5px;font-size:10.5px;line-height:15px;color:#333;">abc</span>
<span class="t" style="letter-spacing:0.41px;left:421.3px;top:738.5px;font-size:12.4px;line-height:17px;color:#333;">actor2</span>
<svg style="left:610px;top:741.5px" width="7" height="11" viewBox="0 0 7 11"><path d="M1 .8L6 5.500L1 10.200" fill="none" stroke="#999" stroke-width="1.500"/></svg>
<div style="left:365px;top:763px;width:261px;height:24px;background:#f0f0f0;border-radius:3px;"></div>
<div style="left:388px;top:763px;width:1px;height:24px;background:#e2e2e2;"></div>
<div style="left:601px;top:763px;width:1px;height:24px;background:#e2e2e2;"></div>
<svg style="left:373px;top:771.5px" width="8" height="8" viewBox="0 0 8 8"><path d="M.6.600L7.400 7.400M7.400.600L.6 7.400" stroke="#9a9a9a" stroke-width="1.500"/></svg>
<span class="t" style="letter-spacing:0.23px;left:396.3px;top:767.5px;font-size:10.5px;line-height:15px;color:#333;">abc</span>
<span class="t" style="letter-spacing:-0.05px;left:421.3px;top:766.5px;font-size:12.4px;line-height:17px;color:#333;">assoc_actor_2</span>
<svg style="left:610px;top:769.5px" width="7" height="11" viewBox="0 0 7 11"><path d="M1 .8L6 5.500L1 10.200" fill="none" stroke="#999" stroke-width="1.500"/></svg>
<div style="left:365px;top:791px;width:261px;height:24px;background:#f0f0f0;border-radius:3px;"></div>
<div style="left:388px;top:791px;width:1px;height:24px;background:#e2e2e2;"></div>
<div style="left:601px;top:791px;width:1px;height:24px;background:#e2e2e2;"></div>
<svg style="left:373px;top:799.5px" width="8" height="8" viewBox="0 0 8 8"><path d="M.6.600L7.400 7.400M7.400.600L.6 7.400" stroke="#9a9a9a" stroke-width="1.500"/></svg>
<span class="t" style="letter-spacing:0.23px;left:396.3px;top:795.5px;font-size:10.5px;line-height:15px;color:#333;">abc</span>
<span class="t" style="letter-spacing:0.3px;left:421.3px;top:794.5px;font-size:12.4px;line-height:17px;color:#333;">inter2</span>
<svg style="left:610px;top:797.5px" width="7" height="11" viewBox="0 0 7 11"><path d="M1 .8L6 5.500L1 10.200" fill="none" stroke="#999" stroke-width="1.500"/></svg>
<div style="left:365px;top:819px;width:261px;height:24px;background:#f0f0f0;border-radius:3px;"></div>
<div style="left:388px;top:819px;width:1px;height:24px;background:#e2e2e2;"></div>
<div style="left:601px;top:819px;width:1px;height:24px;background:#e2e2e2;"></div>
<svg style="left:373px;top:827.5px" width="8" height="8" viewBox="0 0 8 8"><path d="M.6.600L7.400 7.400M7.400.600L.6 7.400" stroke="#9a9a9a" stroke-width="1.500"/></svg>
<span class="t" style="letter-spacing:0.23px;left:396.3px;top:823.5px;font-size:10.5px;line-height:15px;color:#333;">abc</span>
<span class="t" style="letter-spacing:0.28px;left:421.3px;top:822.5px;font-size:12.4px;line-height:17px;color:#333;">interaction</span>
<svg style="left:610px;top:825.5px" width="7" height="11" viewBox="0 0 7 11"><path d="M1 .8L6 5.500L1 10.200" fill="none" stroke="#999" stroke-width="1.500"/></svg>
<div style="left:647px;top:204.5px;width:17px;height:660px;background:#eeeeee;"></div>
<div style="left:649px;top:222px;width:13px;height:264px;background:#b8b8b8;"></div>
<svg style="left:647px;top:204.5px" width="17" height="17" viewBox="0 0 17 17"><path d="M4.800 10.800H12.200L8.500 6.500Z" fill="#a3a3a3"/></svg>
<svg style="left:647px;top:847.5px" width="17" height="17" viewBox="0 0 17 17"><path d="M4.800 6.300H12.200L8.500 10.600Z" fill="#505050"/></svg>
<div style="left:344px;top:806px;width:320px;height:14px;background:linear-gradient(rgba(255,255,255,0),#fff);"></div>
<div style="left:344px;top:820px;width:320px;height:38px;background:#fff;"></div>
<div style="left:426px;top:820px;width:156px;height:31.5px;background:#e5f3f8;border-radius:4px;"></div>
<span class="t" style="letter-spacing:-0.08px;left:458px;top:827.7px;font-size:11.9px;line-height:17px;color:#1a85a0;font-weight:700;">UPDATE CHART</span>
<div style="left:1273px;top:177px;width:75px;height:22px;background:#f0f0f0;border-radius:11px;"></div>
<span class="t" style="letter-spacing:0.39px;left:1283.8px;top:179.5px;font-size:12.4px;line-height:17px;color:#444;">633 rows</span>
<div style="left:1355.5px;top:177px;width:100.5px;height:22px;background:#48b17b;border-radius:11px;"></div>
<span class="t" style="letter-spacing:0.01px;left:1366.2px;top:180.2px;font-size:12px;line-height:17px;color:#fff;font-weight:700;font-family:&quot;Liberation Mono&quot;,monospace;">00:00:03.70</span>
<span class="t" style="letter-spacing:-0.09px;left:696.2px;top:228.3px;font-size:14.5px;line-height:20px;color:#333;">Show</span>
<div style="left:737px;top:224px;width:66.5px;height:29.5px;border:1px solid #d0d0d0;border-radius:4px;background:#fff;"></div>
<span class="t" style="letter-spacing:0.03px;left:751.3px;top:229.1px;font-size:13.4px;line-height:19px;color:#333;">200</span>
<svg style="left:788px;top:234.500px" width="11" height="8" viewBox="0 0 11 8"><path d="M1.300 1.500L5.500 5.800L9.700 1.500" fill="none" stroke="#222" stroke-width="2"/></svg>
<span class="t" style="letter-spacing:0.29px;left:807.6px;top:228.3px;font-size:14.5px;line-height:20px;color:#333;">entries</span>
<div style="left:696px;top:292px;width:727px;height:204px;background:#fafafa;"></div>
<span class="t" style="letter-spacing:-0.14px;left:701.3px;top:267.5px;font-size:12.4px;line-height:17px;color:#333;font-weight:700;">event_id_cnty</span>
<svg style="left:786.3px;top:272px" width="7" height="10" viewBox="0 0 7 10"><path d="M.5 4L3.500 .8L6.500 4Z" fill="#cfcfcf"/><path d="M.5 6L3.500 9.200L6.500 6Z" fill="#cfcfcf"/></svg>
<span class="t" style="letter-spacing:-0.08px;left:803.1px;top:267.5px;font-size:12.4px;line-height:17px;color:#333;font-weight:700;">event_date</span>
<svg style="left:871.5px;top:272px" width="7" height="10" viewBox="0 0 7 10"><path d="M.5 4L3.500 .8L6.500 4Z" fill="#cfcfcf"/><path d="M.5 6L3.500 9.200L6.500 6Z" fill="#cfcfcf"/></svg>
<span class="t" style="letter-spacing:-0.17px;left:888.5px;top:267.5px;font-size:12.4px;line-height:17px;color:#333;font-weight:700;">year</span>
<svg style="left:918.4px;top:272px" width="7" height="10" viewBox="0 0 7 10"><path d="M.5 4L3.500 .8L6.500 4Z" fill="#cfcfcf"/><path d="M.5 6L3.500 9.200L6.500 6Z" fill="#cfcfcf"/></svg>
<span class="t" style="letter-spacing:-0.19px;left:940px;top:267.5px;font-size:12.4px;line-height:17px;color:#333;font-weight:700;">time_precision</span>
<svg style="left:1029.2px;top:272px" width="7" height="10" viewBox="0 0 7 10"><path d="M.5 4L3.500 .8L6.500 4Z" fill="#cfcfcf"/><path d="M.5 6L3.500 9.200L6.500 6Z" fill="#cfcfcf"/></svg>
<span class="t" style="letter-spacing:-0.19px;left:1046.3px;top:267.5px;font-size:12.4px;line-height:17px;color:#333;font-weight:700;">disorder_type</span>
<svg style="left:1130.3px;top:272px" width="7" height="10" viewBox="0 0 7 10"><path d="M.5 4L3.500 .8L6.500 4Z" fill="#cfcfcf"/><path d="M.5 6L3.500 9.200L6.500 6Z" fill="#cfcfcf"/></svg>
<span class="t" style="letter-spacing:-0.08px;left:1147.3px;top:267.5px;font-size:12.4px;line-height:17px;color:#333;font-weight:700;">event_type</span>
<svg style="left:1216.2px;top:272px" width="7" height="10" viewBox="0 0 7 10"><path d="M.5 4L3.500 .8L6.500 4Z" fill="#cfcfcf"/><path d="M.5 6L3.500 9.200L6.500 6Z" fill="#cfcfcf"/></svg>
<span class="t" style="letter-spacing:-0.2px;left:1232.6px;top:267.5px;font-size:12.4px;line-height:17px;color:#333;font-weight:700;">sub_event_type</span>
<svg style="left:1327.8px;top:272px" width="7" height="10" viewBox="0 0 7 10"><path d="M.5 4L3.500 .8L6.500 4Z" fill="#cfcfcf"/><path d="M.5 6L3.500 9.200L6.500 6Z" fill="#cfcfcf"/></svg>
<span class="t" style="letter-spacing:-0.24px;left:1344.8px;top:267.5px;font-size:12.4px;line-height:17px;color:#333;font-weight:700;">actor1</span>
<svg style="left:1385.1px;top:272px" width="7" height="10" viewBox="0 0 7 10"><path d="M.5 4L3.500 .8L6.500 4Z" fill="#cfcfcf"/><path d="M.5 6L3.500 9.200L6.500 6Z" fill="#cfcfcf"/></svg>
<span class="t" style="letter-spacing:-0.43px;left:1434.4px;top:267.5px;font-size:12.4px;line-height:17px;color:#333;font-weight:700;">assoc_actor_1</span>
<div style="left:696px;top:290px;width:742.5px;height:2px;background:#cdcdcd;"></div>
<span class="t" style="letter-spacing:-0.49px;left:701.3px;top:296.5px;font-size:12.4px;line-height:17px;color:#4a4a4a;">GHA1877</span>
<span class="t" style="letter-spacing:-0.3px;left:803.1px;top:296.5px;font-size:12.4px;line-height:17px;color:#4a4a4a;">22</span>
<span class="t" style="letter-spacing:0.17px;left:803.1px;top:313.7px;font-size:12.4px;line-height:17px;color:#4a4a4a;">September</span>
<span class="t" style="letter-spacing:0.47px;left:803.1px;top:329.5px;font-size:12.4px;line-height:17px;color:#4a4a4a;">2023</span>
<span class="t" style="letter-spacing:0.47px;left:888.5px;top:296.5px;font-size:12.4px;line-height:17px;color:#4a4a4a;">2023</span>
<span class="t" style="left:940px;top:296.5px;font-size:12.4px;line-height:17px;color:#4a4a4a;">1</span>
<span class="t" style="letter-spacing:0.21px;left:1046.3px;top:296.5px;font-size:12.4px;line-height:17px;color:#4a4a4a;">Demonstrations</span>
<span class="t" style="letter-spacing:0.22px;left:1147.3px;top:296.5px;font-size:12.4px;line-height:17px;color:#4a4a4a;">Protests</span>
<span class="t" style="letter-spacing:0.21px;left:1232.6px;top:296.5px;font-size:12.4px;line-height:17px;color:#4a4a4a;">Peaceful protest</span>
<span class="t" style="letter-spacing:0.21px;left:1344.8px;top:296.5px;font-size:12.4px;line-height:17px;color:#4a4a4a;">Protesters</span>
<span class="t" style="letter-spacing:-0.08px;left:1344.8px;top:313.7px;font-size:12.4px;line-height:17px;color:#4a4a4a;">(Ghana)</span>
<div style="left:1438.5px;top:262px;width:47px;height:32px;background:#fff;"></div>
<div style="left:1422px;top:292px;width:17px;height:203.5px;background:#eeeeee;"></div>
<div style="left:1424px;top:309.4px;width:13px;height:16.0px;background:#b8b8b8;"></div>
<svg style="left:1422px;top:292px" width="17" height="17" viewBox="0 0 17 17"><path d="M4.800 10.800H12.200L8.500 6.500Z" fill="#a3a3a3"/></svg>
<svg style="left:1422px;top:478.5px" width="17" height="17" viewBox="0 0 17 17"><path d="M4.800 6.300H12.200L8.500 10.600Z" fill="#505050"/></svg>
<div style="left:696px;top:495.5px;width:726px;height:17px;background:#eeeeee;"></div>
<div style="left:713.2px;top:497.5px;width:180.69999999999993px;height:13px;background:#b8b8b8;"></div>
<svg style="left:696px;top:495.5px" width="17" height="17" viewBox="0 0 17 17"><path d="M10.800 4.800V12.200L6.500 8.500Z" fill="#a3a3a3"/></svg>
<svg style="left:1405px;top:495.5px" width="17" height="17" viewBox="0 0 17 17"><path d="M6.300 4.800V12.200L10.600 8.500Z" fill="#505050"/></svg>
<div style="left:1422px;top:495.5px;width:17px;height:17px;background:#d6d6d6;"></div>
<div style="left:1326px;top:520px;width:113px;height:30px;border:1px solid #ddd;border-radius:4px;background:#fff;"></div>
<div style="left:1327px;top:521px;width:25.5px;height:28px;background:#f5f5f5;border-radius:3px 0 0 3px;"></div>
<div style="left:1351.7px;top:521px;width:1px;height:28px;background:#ddd;"></div>
<div style="left:1380.9px;top:521px;width:1px;height:28px;background:#ddd;"></div>
<div style="left:1408.7px;top:521px;width:1px;height:28px;background:#ddd;"></div>
<span class="t" style="left:1339.6px;top:526.5px;font-size:12.4px;line-height:17px;color:#777;transform:translateX(-50%);">1</span>
<span class="t" style="left:1366.8px;top:526.5px;font-size:12.4px;line-height:17px;color:#2b86a8;transform:translateX(-50%);">2</span>
<span class="t" style="left:1395.4px;top:526.5px;font-size:12.4px;line-height:17px;color:#2b86a8;transform:translateX(-50%);">3</span>
<span class="t" style="left:1423.8px;top:526.5px;font-size:12.4px;line-height:17px;color:#2b86a8;transform:translateX(-50%);">4</span>
<div style="left:1058px;top:583px;width:36px;height:1px;background:#d4d4d4;"></div>
<div style="left:1058px;top:587px;width:36px;height:1px;background:#d4d4d4;"></div>
<span class="t" style="letter-spacing:-0.16px;left:681.2px;top:606.1px;font-size:11.9px;line-height:17px;color:#333;">RESULTS</span>
<span class="t" style="letter-spacing:-0.11px;left:766px;top:606.1px;font-size:11.9px;line-height:17px;color:#444;">SAMPLES</span>
<div style="left:681px;top:635px;width:789.5px;height:1px;background:#efefef;"></div>
<div style="left:681px;top:633.5px;width:53px;height:2.5px;background:#282e62;"></div>
<svg style="left:1452.500px;top:604.500px" width="13" height="9" viewBox="0 0 13 9"><path d="M1.200 7.500L6.500 2L11.800 7.500" fill="none" stroke="#333" stroke-width="1.900"/></svg>
<div style="left:681px;top:652px;width:200px;height:34px;border:1px solid #d3d6de;border-radius:4px;background:#fff;"></div>
<svg style="left:696px;top:660px" width="19" height="19" viewBox="0 0 19 19"><circle cx="7.800" cy="7.800" r="6" fill="none" stroke="#333" stroke-width="1.900"/><path d="M12.200 12.200L17.500 17.500" stroke="#333" stroke-width="2.200"/></svg>
<span class="t" style="letter-spacing:-0.19px;left:721.4px;top:659.3px;font-size:14.5px;line-height:20px;color:#bcbcbc;">Search</span>
<div style="left:1372px;top:658px;width:75px;height:22px;background:#f0f0f0;border-radius:11px;"></div>
<span class="t" style="letter-spacing:0.39px;left:1382.8px;top:660.5px;font-size:12.4px;line-height:17px;color:#444;">633 rows</span>
<svg style="left:1456px;top:661px" width="14" height="16" viewBox="0 0 14 16"><path d="M3.500 1H12.500V13" fill="none" stroke="#444" stroke-width="1.300"/><path d="M1 3.500H10V15H3.500L1 12.500Z" fill="#fff" stroke="#444" stroke-width="1.300" stroke-linejoin="round"/><path d="M1 12.500H3.500V15" fill="none" stroke="#444" stroke-width="1.100"/></svg>
<span class="t" style="letter-spacing:-0.22px;left:697.3px;top:705.5px;font-size:12.4px;line-height:17px;color:#333;font-weight:700;">event_id_cnty</span>
<svg style="left:786.3px;top:709px" width="7" height="10" viewBox="0 0 7 10"><path d="M.8 4L3.500 1L6.200 4Z" fill="#d0d0d0"/><path d="M.8 6L3.500 9L6.200 6Z" fill="#d0d0d0"/></svg>
<span class="t" style="letter-spacing:-0.13px;left:818.1px;top:705.5px;font-size:12.4px;line-height:17px;color:#333;font-weight:700;">event_date</span>
<svg style="left:890.4px;top:709px" width="7" height="10" viewBox="0 0 7 10"><path d="M.8 4L3.500 1L6.200 4Z" fill="#d0d0d0"/><path d="M.8 6L3.500 9L6.200 6Z" fill="#d0d0d0"/></svg>
<span class="t" style="letter-spacing:-0.17px;left:947.6px;top:705.5px;font-size:12.4px;line-height:17px;color:#333;font-weight:700;">year</span>
<svg style="left:981.2px;top:709px" width="7" height="10" viewBox="0 0 7 10"><path d="M.8 4L3.500 1L6.200 4Z" fill="#d0d0d0"/><path d="M.8 6L3.500 9L6.200 6Z" fill="#d0d0d0"/></svg>
<span class="t" style="letter-spacing:-0.22px;left:1013.2px;top:705.5px;font-size:12.4px;line-height:17px;color:#333;font-weight:700;">time_precision</span>
<svg style="left:1106.3px;top:709px" width="7" height="10" viewBox="0 0 7 10"><path d="M.8 4L3.500 1L6.200 4Z" fill="#d0d0d0"/><path d="M.8 6L3.500 9L6.200 6Z" fill="#d0d0d0"/></svg>
<span class="t" style="letter-spacing:-0.22px;left:1138.4px;top:705.5px;font-size:12.4px;line-height:17px;color:#333;font-weight:700;">disorder_type</span>
<svg style="left:1226.2px;top:709px" width="7" height="10" viewBox="0 0 7 10"><path d="M.8 4L3.500 1L6.200 4Z" fill="#d0d0d0"/><path d="M.8 6L3.500 9L6.200 6Z" fill="#d0d0d0"/></svg>
<span class="t" style="letter-spacing:-0.13px;left:1258.6px;top:705.5px;font-size:12.4px;line-height:17px;color:#333;font-weight:700;">event_type</span>
<svg style="left:1330.7px;top:709px" width="7" height="10" viewBox="0 0 7 10"><path d="M.8 4L3.500 1L6.200 4Z" fill="#d0d0d0"/><path d="M.8 6L3.500 9L6.200 6Z" fill="#d0d0d0"/></svg>
<span class="t" style="letter-spacing:-0.2px;left:1362.8px;top:705.5px;font-size:12.4px;line-height:17px;color:#333;font-weight:700;">sub_event_type</span>
<div style="left:681px;top:726px;width:773px;height:2px;background:#d0d0d0;"></div>
<span class="t" style="letter-spacing:-0.49px;left:697.3px;top:733.8px;font-size:12.4px;line-height:17px;color:#4a4a4a;">GHA1877</span>
<span class="t" style="letter-spacing:0.26px;left:818.1px;top:733.8px;font-size:12.4px;line-height:17px;color:#4a4a4a;">22 September 2023</span>
<span class="t" style="letter-spacing:0.47px;left:947.6px;top:733.8px;font-size:12.4px;line-height:17px;color:#4a4a4a;">2023</span>
<span class="t" style="left:1013.2px;top:733.8px;font-size:12.4px;line-height:17px;color:#4a4a4a;">1</span>
<span class="t" style="letter-spacing:0.17px;left:1138.4px;top:733.8px;font-size:12.4px;line-height:17px;color:#4a4a4a;">Demonstrations</span>
<span class="t" style="letter-spacing:0.18px;left:1258.6px;top:733.8px;font-size:12.4px;line-height:17px;color:#4a4a4a;">Protests</span>
<span class="t" style="letter-spacing:0.21px;left:1362.8px;top:733.8px;font-size:12.4px;line-height:17px;color:#4a4a4a;">Peaceful protest</span>
<div style="left:681px;top:755.4px;width:773px;height:1px;background:#dcdcdc;"></div>
<span class="t" style="letter-spacing:-0.61px;left:697.3px;top:762.0px;font-size:12.4px;line-height:17px;color:#4a4a4a;">GUI2611</span>
<span class="t" style="letter-spacing:0.26px;left:818.1px;top:762.0px;font-size:12.4px;line-height:17px;color:#4a4a4a;">22 September 2023</span>
<span class="t" style="letter-spacing:0.47px;left:947.6px;top:762.0px;font-size:12.4px;line-height:17px;color:#4a4a4a;">2023</span>
<span class="t" style="left:1013.2px;top:762.0px;font-size:12.4px;line-height:17px;color:#4a4a4a;">1</span>
<span class="t" style="letter-spacing:0.17px;left:1138.4px;top:762.0px;font-size:12.4px;line-height:17px;color:#4a4a4a;">Demonstrations</span>
<span class="t" style="letter-spacing:0.18px;left:1258.6px;top:762.0px;font-size:12.4px;line-height:17px;color:#4a4a4a;">Protests</span>
<span class="t" style="letter-spacing:0.32px;left:1362.8px;top:762.0px;font-size:12.4px;line-height:17px;color:#4a4a4a;">Protest with intervention</span>
<div style="left:681px;top:784.1px;width:773px;height:1px;background:#dcdcdc;"></div>
<span class="t" style="letter-spacing:-0.4px;left:697.3px;top:790.1999999999999px;font-size:12.4px;line-height:17px;color:#4a4a4a;">MAA1691</span>
<span class="t" style="letter-spacing:0.26px;left:818.1px;top:790.1999999999999px;font-size:12.4px;line-height:17px;color:#4a4a4a;">22 September 2023</span>
<span class="t" style="letter-spacing:0.47px;left:947.6px;top:790.1999999999999px;font-size:12.4px;line-height:17px;color:#4a4a4a;">2023</span>
<span class="t" style="left:1013.2px;top:790.1999999999999px;font-size:12.4px;line-height:17px;color:#4a4a4a;">1</span>
<span class="t" style="letter-spacing:0.17px;left:1138.4px;top:790.1999999999999px;font-size:12.4px;line-height:17px;color:#4a4a4a;">Demonstrations</span>
<span class="t" style="letter-spacing:0.18px;left:1258.6px;top:790.1999999999999px;font-size:12.4px;line-height:17px;color:#4a4a4a;">Protests</span>
<span class="t" style="letter-spacing:0.21px;left:1362.8px;top:790.1999999999999px;font-size:12.4px;line-height:17px;color:#4a4a4a;">Peaceful protest</span>
<div style="left:1470.5px;top:694px;width:15px;height:120px;background:#fff;"></div>
<div style="left:1454px;top:693.5px;width:17px;height:104px;background:#eeeeee;"></div>
<div style="left:1456px;top:710.8px;width:13px;height:17.200000000000045px;background:#b8b8b8;"></div>
<svg style="left:1454px;top:693.5px" width="17" height="17" viewBox="0 0 17 17"><path d="M4.800 10.800H12.200L8.500 6.500Z" fill="#a3a3a3"/></svg>
<svg style="left:1454px;top:780.5px" width="17" height="17" viewBox="0 0 17 17"><path d="M4.800 6.300H12.200L8.500 10.600Z" fill="#505050"/></svg>
<div style="left:681px;top:797.4px;width:773px;height:17px;background:#eeeeee;"></div>
<div style="left:698.2px;top:799.4px;width:119.59999999999991px;height:13px;background:#b8b8b8;"></div>
<svg style="left:681px;top:797.4px" width="17" height="17" viewBox="0 0 17 17"><path d="M10.800 4.800V12.200L6.500 8.500Z" fill="#a3a3a3"/></svg>
<svg style="left:1437px;top:797.4px" width="17" height="17" viewBox="0 0 17 17"><path d="M6.300 4.800V12.200L10.600 8.500Z" fill="#505050"/></svg>
<div style="left:1454px;top:797.4px;width:17px;height:17px;background:#d6d6d6;"></div>
<span class="t" style="left:910px;top:832.5px;font-size:12.4px;line-height:17px;color:#555;transform:translateX(-50%);">«</span>
<div style="left:934px;top:823.75px;width:30px;height:33px;background:#079dc2;border-radius:4px;"></div>
<span class="t" style="left:949.3px;top:830.8px;font-size:14.5px;line-height:20px;color:#fff;transform:translateX(-50%);">1</span>
<span class="t" style="left:987.5px;top:831.2px;font-size:14.5px;line-height:20px;color:#444;transform:translateX(-50%);">2</span>
<span class="t" style="left:1028.5px;top:831.2px;font-size:14.5px;line-height:20px;color:#444;transform:translateX(-50%);">3</span>
<span class="t" style="left:1070px;top:831.2px;font-size:14.5px;line-height:20px;color:#444;transform:translateX(-50%);">4</span>
<span class="t" style="left:1110.7px;top:831.2px;font-size:14.5px;line-height:20px;color:#444;transform:translateX(-50%);">5</span>
<span class="t" style="left:1153px;top:831.2px;font-size:14.5px;line-height:20px;color:#444;transform:translateX(-50%);">…</span>
<span class="t" style="left:1198.2px;top:831.2px;font-size:14.5px;line-height:20px;color:#444;transform:translateX(-50%);">13</span>
<span class="t" style="left:1241.7px;top:832.5px;font-size:12.4px;line-height:17px;color:#555;transform:translateX(-50%);">»</span>
</div></body></html>
